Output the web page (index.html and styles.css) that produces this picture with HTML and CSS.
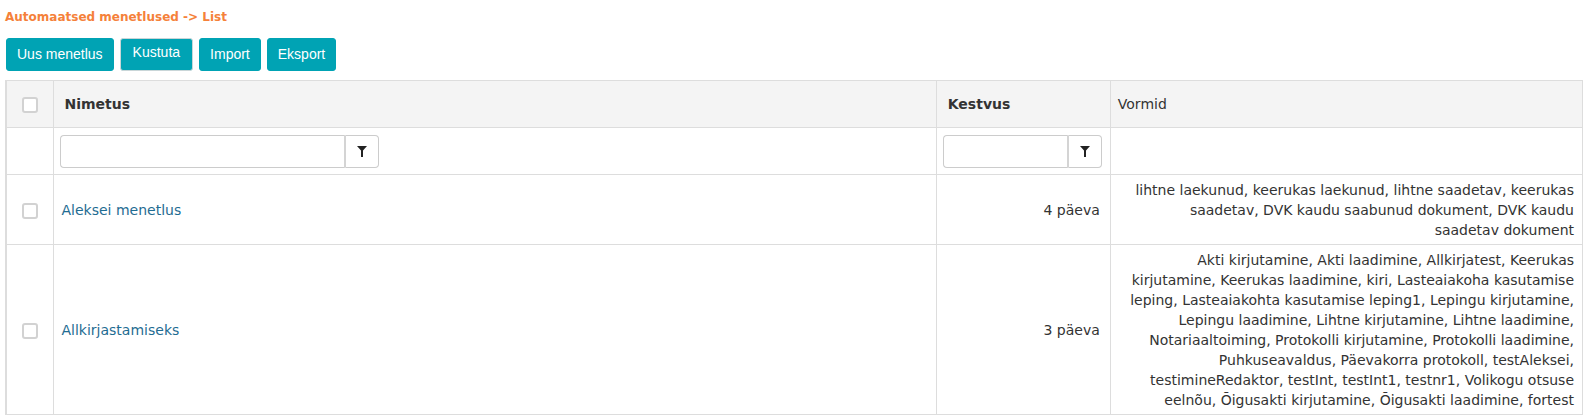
FILE: index.html
```html
<!DOCTYPE html>
<html>
<head>
<meta charset="utf-8">
<link rel="stylesheet" href="styles.css">
</head>
<body>
<div class="page">
  <div class="breadcrumb">Automaatsed menetlused -&gt; List</div>
  <div class="toolbar">
    <button class="btn">Uus menetlus</button>
    <button class="btn btn-focus">Kustuta</button>
    <button class="btn">Import</button>
    <button class="btn">Eksport</button>
  </div>
  <table class="grid">
    <colgroup>
      <col class="c-check">
      <col class="c-name">
      <col class="c-dur">
      <col class="c-forms">
    </colgroup>
    <thead>
      <tr class="head">
        <th class="check"><span class="cb"></span></th>
        <th class="sortable">Nimetus</th>
        <th class="sortable">Kestvus</th>
        <th class="plain">Vormid</th>
      </tr>
      <tr class="filters">
        <td class="check"></td>
        <td class="fcell">
          <div class="fgroup fg-name">
            <input class="finput" type="text">
            <span class="fbtn"><svg width="10" height="11" viewBox="0 0 10 11"><path d="M0 0H10L6 4.5V11H4V4.5Z" fill="#222"/></svg></span>
          </div>
        </td>
        <td class="fcell">
          <div class="fgroup fg-dur">
            <input class="finput" type="text">
            <span class="fbtn"><svg width="10" height="11" viewBox="0 0 10 11"><path d="M0 0H10L6 4.5V11H4V4.5Z" fill="#222"/></svg></span>
          </div>
        </td>
        <td></td>
      </tr>
    </thead>
    <tbody>
      <tr>
        <td class="check"><span class="cb"></span></td>
        <td class="name"><a href="#">Aleksei menetlus</a></td>
        <td class="dur">4 päeva</td>
        <td class="forms">lihtne laekunud, keerukas laekunud, lihtne saadetav, keerukas saadetav, DVK kaudu saabunud dokument, DVK kaudu saadetav dokument</td>
      </tr>
      <tr>
        <td class="check"><span class="cb"></span></td>
        <td class="name"><a href="#">Allkirjastamiseks</a></td>
        <td class="dur">3 päeva</td>
        <td class="forms">Akti kirjutamine, Akti laadimine, Allkirjatest, Keerukas kirjutamine, Keerukas laadimine, kiri, Lasteaiakoha kasutamise leping, Lasteaiakohta kasutamise leping1, Lepingu kirjutamine, Lepingu laadimine, Lihtne kirjutamine, Lihtne laadimine, Notariaaltoiming, Protokolli kirjutamine, Protokolli laadimine, Puhkuseavaldus, Päevakorra protokoll, testAleksei, testimineRedaktor, testInt, testInt1, testnr1, Volikogu otsuse eelnõu, Õigusakti kirjutamine, Õigusakti laadimine, fortest</td>
      </tr>
    </tbody>
  </table>
</div>
</body>
</html>
```

FILE: styles.css
```css
html, body {
  margin: 0;
  padding: 0;
  background: #fff;
}

.page {
  padding: 10px 5px 0 5px;
  font-family: "DejaVu Sans", Verdana, sans-serif;
  color: #333;
}

.breadcrumb {
  font-size: 12px;
  font-weight: bold;
  color: #f5813a;
  line-height: 14px;
  height: 14px;
}

.toolbar {
  display: flex;
  gap: 6px;
  margin-top: 14px;
  padding-left: 1px;
}

.btn {
  font-family: "Liberation Sans", Arial, sans-serif;
  font-size: 14px;
  color: #fff;
  background: #00a3b4;
  border: 1px solid #00a3b4;
  border-radius: 3px;
  height: 33px;
  padding: 0 10px;
  line-height: 31px;
  cursor: pointer;
}

.btn-focus {
  border-color: #c9d6d8;
  padding: 0 12px 4px 12px;
  line-height: 27px;
}

.grid {
  margin-top: 9px;
  border-collapse: collapse;
  table-layout: fixed;
  width: 1578px;
  font-size: 14px;
  border-left: 2px solid #ddd;
}

.c-check { width: 47px; }
.c-name { width: 883px; }
.c-dur { width: 174px; }
.c-forms { width: 472px; }

.grid th, .grid td {
  border: 1px solid #ddd;
  padding: 0;
  vertical-align: middle;
}

.head th {
  background: #f4f4f4;
  height: 46px;
  text-align: left;
}

.head .sortable {
  font-weight: bold;
  padding-left: 11px;
}

.head .plain {
  font-weight: normal;
  padding-left: 7px;
}

.grid .check {
  text-align: center;
  padding: 0;
}

.cb {
  display: inline-block;
  width: 12px;
  height: 12px;
  border: 2px solid #d2d2d2;
  border-radius: 3px;
  background: #fff;
  vertical-align: middle;
}

.filters td {
  height: 46px;
}

.grid .fcell {
  padding-left: 6px;
}

.fgroup {
  display: flex;
  height: 33px;
}

.fg-name { width: 319px; }
.fg-dur { width: 159px; }

.finput {
  flex: 1;
  min-width: 0;
  height: 33px;
  box-sizing: border-box;
  border: 1px solid #ccc;
  border-right: 2px solid #d4d4d4;
  border-radius: 4px 0 0 4px;
  margin: 0;
  padding: 0 6px;
  font-size: 13px;
  outline: none;
}

.fbtn {
  width: 33px;
  height: 33px;
  box-sizing: border-box;
  border: 1px solid #ccc;
  border-left: none;
  border-radius: 0 4px 4px 0;
  display: flex;
  align-items: center;
  justify-content: center;
  background: #fff;
}

.grid tbody td {
  line-height: 20px;
  padding-top: 5px;
  padding-bottom: 4px;
}

.grid .name {
  padding-left: 8px;
}

.name a {
  color: #1f6c92;
  text-decoration: none;
}

.grid .dur {
  text-align: right;
  padding-right: 10px;
}

.grid .forms {
  text-align: right;
  padding-left: 14px;
  padding-right: 8px;
}
```
